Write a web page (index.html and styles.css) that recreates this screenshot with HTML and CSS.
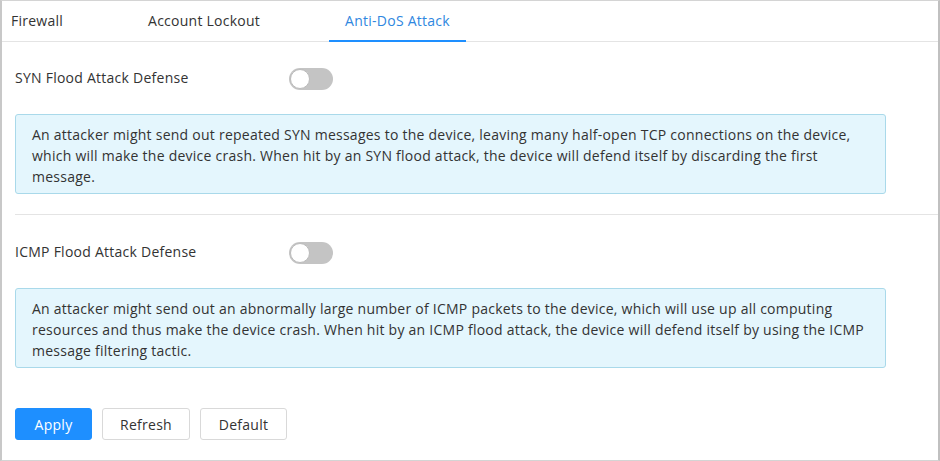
FILE: index.html
```html
<!DOCTYPE html>
<html>
<head>
<meta charset="utf-8">
<link rel="stylesheet" href="styles.css">
</head>
<body>
<div class="frame">
  <div class="tabs">
    <div class="tab">Firewall</div>
    <div class="tab">Account Lockout</div>
    <div class="tab active">Anti-DoS Attack</div>
  </div>
  <div class="section first">
    <div class="row">
      <span class="label">SYN Flood Attack Defense</span>
      <span class="switch"><span class="knob"></span></span>
    </div>
    <div class="info">An attacker might send out repeated SYN messages to the device, leaving many half-open TCP connections on the device, which will make the device crash. When hit by an SYN flood attack, the device will defend itself by discarding the first message.</div>
  </div>
  <div class="divider"></div>
  <div class="section second">
    <div class="row">
      <span class="label">ICMP Flood Attack Defense</span>
      <span class="switch"><span class="knob"></span></span>
    </div>
    <div class="info">An attacker might send out an abnormally large number of ICMP packets to the device, which will use up all computing resources and thus make the device crash. When hit by an ICMP flood attack, the device will defend itself by using the ICMP message filtering tactic.</div>
  </div>
  <div class="buttons">
    <button class="btn primary">Apply</button>
    <button class="btn">Refresh</button>
    <button class="btn">Default</button>
  </div>
</div>
</body>
</html>
```
FILE: styles.css
```css
* { box-sizing: border-box; }
html, body { margin: 0; padding: 0; background: #fff; }
body { font-family: "Open Sans", "Noto Sans", sans-serif; font-size: 14px; letter-spacing: 0.25px; color: #333; }
.frame {
  width: 940px; height: 461px;
  border: 1px solid #d4d4d4;
  border-left: 2px solid #c8c8c8;
  border-right: 2px solid #c0c0c0;
  overflow: hidden;
}
.tabs {
  display: flex; gap: 85px;
  height: 41px; padding-left: 9px;
  border-bottom: 1px solid #e4e4e4;
}
.tab { position: relative; line-height: 40px; color: #333; white-space: nowrap; }
.tab.active { color: #2f87e0; }
.tab.active::after {
  content: ""; position: absolute; left: -16px; right: -16px; bottom: -1px;
  height: 2px; background: #1e8fff;
}
.section { padding-left: 13px; }
.section.first { padding-top: 26px; }
.section.second { padding-top: 27px; }
.row { display: flex; align-items: center; height: 22px; }
.label { width: 274px; margin-top: -3px; }
.switch {
  position: relative; width: 44px; height: 22px; border-radius: 11px; background: #c4c4c4;
}
.knob {
  position: absolute; left: 1px; top: 1px; width: 20px; height: 20px; border-radius: 50%;
  background: #fff; border: 1px solid #bbb;
}
.info {
  margin-top: 24px; width: 871px; height: 80px;
  background: #e4f6fd; border: 1px solid #a9d9ea; border-radius: 3px;
  padding: 9px 16px; line-height: 21px; color: #333;
}
.divider { margin: 20px 0 0 13px; height: 1px; background: #e4e4e4; }
.buttons { display: flex; gap: 10px; padding: 40px 0 0 13px; }
.btn {
  font-family: inherit; font-size: 14px; letter-spacing: 0.25px; color: #333; height: 32px;
  background: #fff; border: 1px solid #d9d9d9; border-radius: 3px; padding: 0; width: 88px;
}
.btn.primary { background: #1e8fff; border-color: #1e8fff; color: #fff; width: 77px; }
.btn:last-child { width: 87px; }
```
